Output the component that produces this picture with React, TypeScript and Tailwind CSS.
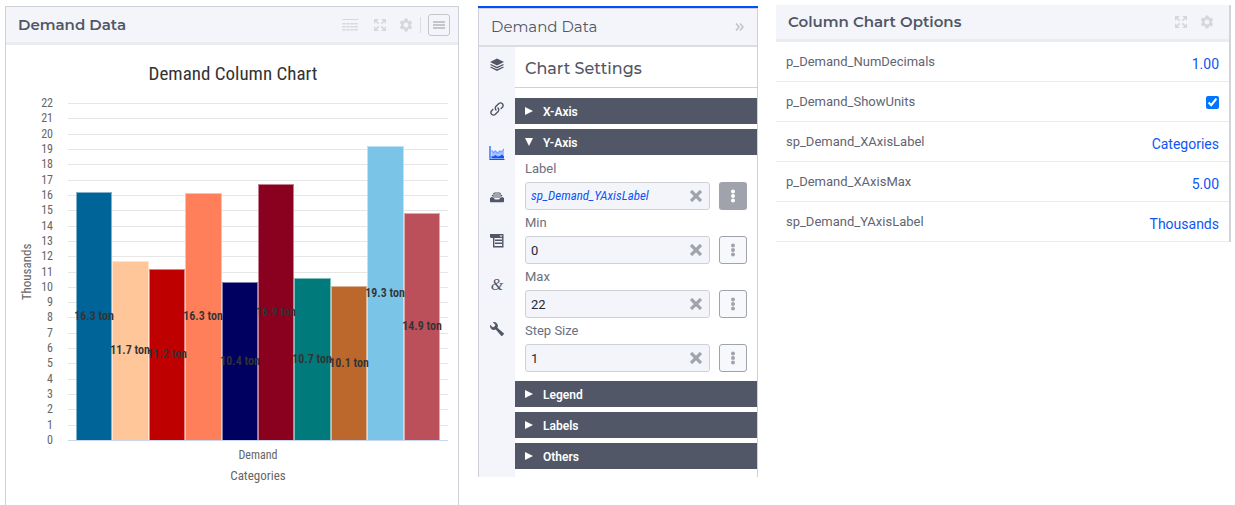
import { useState } from "react";
import type { ReactNode } from "react";
import { MdSettings } from "react-icons/md";
import { ImEnlarge, ImLink, ImWrench } from "react-icons/im";

const bars = [
  { label: "16.3 ton", top: 192, color: "#006499", x: 76 },
  { label: "11.7 ton", top: 261, color: "#ffc699", x: 112 },
  { label: "11.2 ton", top: 269, color: "#bf0000", x: 149 },
  { label: "16.3 ton", top: 193, color: "#ff7f5a", x: 185 },
  { label: "10.4 ton", top: 282, color: "#000060", x: 222 },
  { label: "16.9 ton", top: 184, color: "#8a001f", x: 258 },
  { label: "10.7 ton", top: 278, color: "#007a7a", x: 294 },
  { label: "10.1 ton", top: 286, color: "#bc682c", x: 331 },
  { label: "19.3 ton", top: 146, color: "#7ac4e8", x: 367 },
  { label: "14.9 ton", top: 213, color: "#bc505a", x: 404 },
];

const BASE = 440;
const TOP = 103;
const ticks = Array.from({ length: 23 }, (_, value) => ({
  value,
  y: Math.round(BASE - (value * (BASE - TOP)) / 22),
}));

function ColumnChart() {
  return (
    <svg
      viewBox="6 45 452 460"
      role="img"
      aria-label="Demand Column Chart"
      className="block w-full font-['Roboto_Condensed','Liberation_Sans_Narrow',Roboto,sans-serif]"
    >
      <text x="233" y="80" textAnchor="middle" className="fill-[#333333] text-[19px]">
        Demand Column Chart
      </text>
      {ticks.map((t) => (
        <g key={t.value}>
          <rect x="68" y={t.y} width="380" height="1" className="fill-[#e6e6e6]" />
          <text x="53" y={t.y + 4} textAnchor="end" className="fill-[#666666] text-[12px]">
            {t.value}
          </text>
        </g>
      ))}
      {bars.map((b, i) => {
        const right = i < bars.length - 1 ? bars[i + 1].x : 440;
        return (
          <g key={b.x}>
            <rect x={b.x} y={b.top} width={right - b.x} height={BASE - b.top} fill={b.color} />
            <rect
              x={b.x + 0.5}
              y={b.top + 0.5}
              width={right - b.x - 1}
              height={BASE - b.top}
              className="fill-none stroke-white/50"
            />
          </g>
        );
      })}
      <rect x="68" y="440" width="380" height="1" className="fill-[#ccd6eb]" />
      {bars.map((b) => (
        <text
          key={b.x}
          x={b.x + 18}
          y={Math.floor((b.top + BASE) / 2) + 4}
          textAnchor="middle"
          className="fill-[#333333] text-[12px] font-semibold"
        >
          {b.label}
        </text>
      ))}
      <text x="258" y="459" textAnchor="middle" className="fill-[#666666] text-[12px]">
        Demand
      </text>
      <text x="258" y="480" textAnchor="middle" className="fill-[#666666] text-[13px]">
        Categories
      </text>
      <text
        x="31"
        y="272"
        textAnchor="middle"
        transform="rotate(-90 31 272)"
        className="fill-[#666666] text-[13px]"
      >
        Thousands
      </text>
    </svg>
  );
}

function TableIcon() {
  return (
    <svg viewBox="0 0 16 12" className="h-3 w-4 fill-current" aria-hidden="true">
      <rect width="16" height="1" />
      {[4, 7, 10].map((y) =>
        [0, 4, 8, 12].map((x) => <rect key={`${x}-${y}`} x={x + 0.3} y={y} width="3.3" height="1.5" />),
      )}
    </svg>
  );
}

function LayersIcon() {
  return (
    <svg viewBox="0 0 16 16" className="h-4 w-4" aria-hidden="true">
      <path d="M8 1.500L15 5 8 8.500 1 5z" className="fill-current" />
      <path
        d="M1.500 7.500L8 10.700l6.500-3.200M1.500 10L8 13.200l6.500-3.200"
        className="fill-none stroke-current"
        strokeWidth="1.300"
      />
    </svg>
  );
}

function AreaIcon() {
  return (
    <svg viewBox="0 0 16 16" className="h-4 w-4" aria-hidden="true">
      <path d="M1 1v13.500h14.500" className="fill-none stroke-[#0f55f5]" strokeWidth="1.200" />
      <path d="M2.500 4l2 2 2-1 2 2 2-2 2 1 2.500-3v9H2.500z" className="fill-[#a6c0fb]" />
      <path
        d="M2.500 6l2 2 2-2 2 2.500 2-2 2 .5 2.500-3"
        className="fill-none stroke-[#5c8bf8]"
        strokeWidth="0.8"
      />
      <path d="M2.500 11l2 .5 2-1.500 2 1.500 2.500-.5 2-1.500 2 2v2H2.500z" className="fill-[#0f55f5]" />
    </svg>
  );
}

function DrawerIcon() {
  return (
    <svg viewBox="0 0 16 16" className="h-4 w-4" aria-hidden="true">
      <path
        d="M4.500 5Q5 4 6 4h4q1 0 1.500 1M3 7Q3.500 6 5 6h6q1.500 0 2 1M1.500 9.500Q2.500 8 4 8h8q1.500 0 2.500 1.500"
        className="fill-none stroke-current"
        strokeWidth="1.100"
      />
      <path
        d="M1 9h4q.4 1.500 1.500 1.500h3q1.100 0 1.500-1.500h4v3.500q0 .8-.8.8H1.800q-.8 0-.8-.8z"
        className="fill-current"
      />
    </svg>
  );
}

function ListIcon() {
  return (
    <svg viewBox="0 0 16 16" className="h-4 w-4" aria-hidden="true">
      <path d="M1 1h13.500v4H2.500Q1 5 1 3.500z" className="fill-current" />
      <path d="M10.500 2.500h3l-1.500 1.700z" className="fill-white" />
      <path
        d="M4.700 4.500v9.300h9.100V4.500M6 7.300h7M6 10.300h7"
        className="fill-none stroke-current"
        strokeWidth="1.400"
      />
    </svg>
  );
}

function KebabIcon() {
  return (
    <svg viewBox="0 0 6 14" className="h-[14px] w-[6px] fill-current" aria-hidden="true">
      <circle cx="3" cy="2.500" r="2" />
      <circle cx="3" cy="7" r="2" />
      <circle cx="3" cy="11.500" r="2" />
    </svg>
  );
}

function IconButton({ label, children }: { label: string; children: ReactNode }) {
  return (
    <button type="button" aria-label={label} className="flex h-4 items-center justify-center text-[#d6d7db]">
      {children}
    </button>
  );
}

function Section({ title, defaultOpen = false, children }: { title: string; defaultOpen?: boolean; children?: ReactNode }) {
  const [open, setOpen] = useState(defaultOpen);
  return (
    <section>
      <button
        type="button"
        aria-expanded={open}
        onClick={() => setOpen(!open)}
        className="flex h-[26px] w-full items-center gap-2.5 bg-[#515766] px-2.5 text-left text-[12px] font-semibold text-white"
      >
        <svg viewBox="0 0 8 8" className="h-2 w-2 fill-white" aria-hidden="true">
          <path d={open ? "M0 0h8L4 8z" : "M0 0l8 4-8 4z"} />
        </svg>
        <span className="pt-0.5">{title}</span>
      </button>
      {open && children}
    </section>
  );
}

function Field({ id, label, value, bound = false }: { id: string; label: string; value: string; bound?: boolean }) {
  const [text, setText] = useState(value);
  return (
    <div>
      <label htmlFor={id} className="block h-[26px] text-[13px] leading-[26px] text-[#6b7080]">
        {label}
      </label>
      <div className="flex gap-[9px]">
        <div className="flex h-7 min-w-0 flex-1 items-center rounded-[3px] border border-[#d0d1d6] bg-[#f4f5fa] pr-[7px] pl-[5px]">
          <input
            id={id}
            value={text}
            onChange={(e) => setText(e.target.value)}
            className={
              bound
                ? "min-w-0 flex-1 bg-transparent font-['Roboto_Condensed','Liberation_Sans_Narrow',Roboto,sans-serif] text-[13px] text-[#0f55f5] italic outline-none"
                : "min-w-0 flex-1 bg-transparent pt-0.5 text-[13px] text-[#23283c] outline-none"
            }
          />
          <button type="button" aria-label={`Clear ${label}`} onClick={() => setText("")} className="text-[#a0a3ab]">
            <svg viewBox="0 0 12 12" className="h-3 w-3 fill-none stroke-current" strokeWidth="3.2" aria-hidden="true">
              <path d="M1 1l10 10M11 1L1 11" />
            </svg>
          </button>
        </div>
        <button
          type="button"
          aria-label={`${label} options`}
          className={
            bound
              ? "flex h-7 w-7 items-center justify-center rounded-[3px] bg-[#a0a3ab] text-white"
              : "flex h-7 w-7 items-center justify-center rounded-[3px] border border-[#a0a3ab] bg-[#f7f8fb] text-[#a0a3ab]"
          }
        >
          <KebabIcon />
        </button>
      </div>
    </div>
  );
}

const tools: { label: string; icon: ReactNode; active?: boolean }[] = [
  { label: "Layers", icon: <LayersIcon /> },
  { label: "Links", icon: <ImLink size={14} /> },
  { label: "Chart", icon: <AreaIcon />, active: true },
  { label: "Store", icon: <DrawerIcon /> },
  { label: "List", icon: <ListIcon /> },
  { label: "Text", icon: <span className="font-['Liberation_Serif',serif] text-[16px] leading-none italic">&amp;</span> },
  { label: "Tools", icon: <ImWrench size={14} /> },
];

const options = [
  { name: "p_Demand_NumDecimals", value: "1.00" },
  { name: "p_Demand_ShowUnits", value: true },
  { name: "sp_Demand_XAxisLabel", value: "Categories" },
  { name: "p_Demand_XAxisMax", value: "5.00" },
  { name: "sp_Demand_YAxisLabel", value: "Thousands" },
];

export default function App() {
  return (
    <main className="grid grid-cols-[minmax(0,1fr)_280px_minmax(0,1fr)] items-start gap-x-[18px] bg-white pr-1 pl-[5px] font-[Roboto,sans-serif] text-[#515766]">
      <section className="mt-1.5 mr-px border-x border-t border-[#d0d1d8]">
        <header className="flex h-[38px] items-center border-b-[3px] border-[#ebecf2] bg-[#f4f5fa] pt-px pr-2 pl-3">
          <h2 className="flex-1 font-[Montserrat,Inter,sans-serif] text-[15px] font-semibold">Demand Data</h2>
          <div className="mr-4 flex">
            <IconButton label="Table view">
              <TableIcon />
            </IconButton>
          </div>
          <div className="flex items-center gap-3">
            <IconButton label="Expand">
              <ImEnlarge size={12} />
            </IconButton>
            <IconButton label="Settings">
              <MdSettings size={16} />
            </IconButton>
          </div>
          <div className="ml-1.5 h-4 w-px bg-[#dcdde2]" />
          <button
            type="button"
            aria-label="Menu"
            className="ml-[7px] flex h-[22px] w-[22px] items-center justify-center rounded-[3px] border border-[#c4c6cb] text-[#c4c6cb]"
          >
            <svg viewBox="0 0 12 8" className="h-2 w-3 fill-current" aria-hidden="true">
              <path d="M0 0h12v2H0zM0 3h12v2H0zM0 6h12v2H0z" />
            </svg>
          </button>
        </header>
        <ColumnChart />
      </section>

      <section className="mt-1.5 border-t-2 border-[#0050ff]">
        <div className="border-x border-t border-[#d0d1d8]">
          <header className="flex h-[38px] items-center border-b-2 border-[#dcdde2] bg-[#f4f5fa] pr-[13px] pl-3">
            <h2 className="flex-1 font-[Montserrat,Inter,sans-serif] text-[15px]">Demand Data</h2>
            <IconButton label="Collapse panel">
              <svg viewBox="0 0 9 8" className="h-2 w-[9px] fill-none stroke-[#c0c2c8]" strokeWidth="1.500" aria-hidden="true">
                <path d="M1 .5L4 4 1 7.500M5 .5L8 4 5 7.500" />
              </svg>
            </IconButton>
          </header>
          <div className="flex">
            <nav aria-label="Settings groups" className="flex w-9 flex-col items-center gap-7 bg-[#f4f5fa] pt-2.5">
              {tools.map((t) => (
                <button
                  key={t.label}
                  type="button"
                  aria-label={t.label}
                  aria-pressed={!!t.active}
                  className="flex h-4 w-4 items-center justify-center"
                >
                  {t.icon}
                </button>
              ))}
            </nav>
            <div className="min-w-0 flex-1 pb-2">
              <h3 className="mb-2.5 h-[41px] border-b border-[#d0d1d6] pl-2.5 font-[Montserrat,Inter,sans-serif] text-[16px] leading-[44px] font-medium">
                Chart Settings
              </h3>
              <div className="flex flex-col gap-[5px]">
                <Section title="X-Axis" />
                <Section title="Y-Axis" defaultOpen>
                  <div className="px-2.5 pt-px pb-1">
                    <Field id="axis-label" label="Label" value="sp_Demand_YAxisLabel" bound />
                    <Field id="axis-min" label="Min" value="0" />
                    <Field id="axis-max" label="Max" value="22" />
                    <Field id="axis-step" label="Step Size" value="1" />
                  </div>
                </Section>
                <Section title="Legend" />
                <Section title="Labels" />
                <Section title="Others" />
              </div>
            </div>
          </div>
        </div>
      </section>

      <section className="mt-[5px] border-r-2 border-[#d3d4d9]">
        <header className="flex h-[37px] items-center gap-3 border-b-[3px] border-[#ebecf2] bg-[#f4f5fa] pr-3.5 pl-3">
          <h2 className="flex-1 font-[Montserrat,Inter,sans-serif] text-[15px] font-semibold">Column Chart Options</h2>
          <IconButton label="Expand options">
            <ImEnlarge size={12} />
          </IconButton>
          <IconButton label="Configure options">
            <MdSettings size={16} />
          </IconButton>
        </header>
        {options.map((o) => (
          <div key={o.name} className="flex h-10 items-center justify-between border-b border-[#ebecee] pr-2.5 pl-2.5">
            <label htmlFor={o.name} className="text-[13px] text-[#5f6573]">
              {o.name}
            </label>
            {typeof o.value === "boolean" ? (
              <input id={o.name} type="checkbox" defaultChecked={o.value} className="mt-0.5 h-[13px] w-[13px] accent-[#0075ff]" />
            ) : (
              <input
                id={o.name}
                defaultValue={o.value}
                className="mt-1.5 w-32 bg-transparent text-right text-[14px] text-[#0f55f5] outline-none"
              />
            )}
          </div>
        ))}
      </section>
    </main>
  );
}
